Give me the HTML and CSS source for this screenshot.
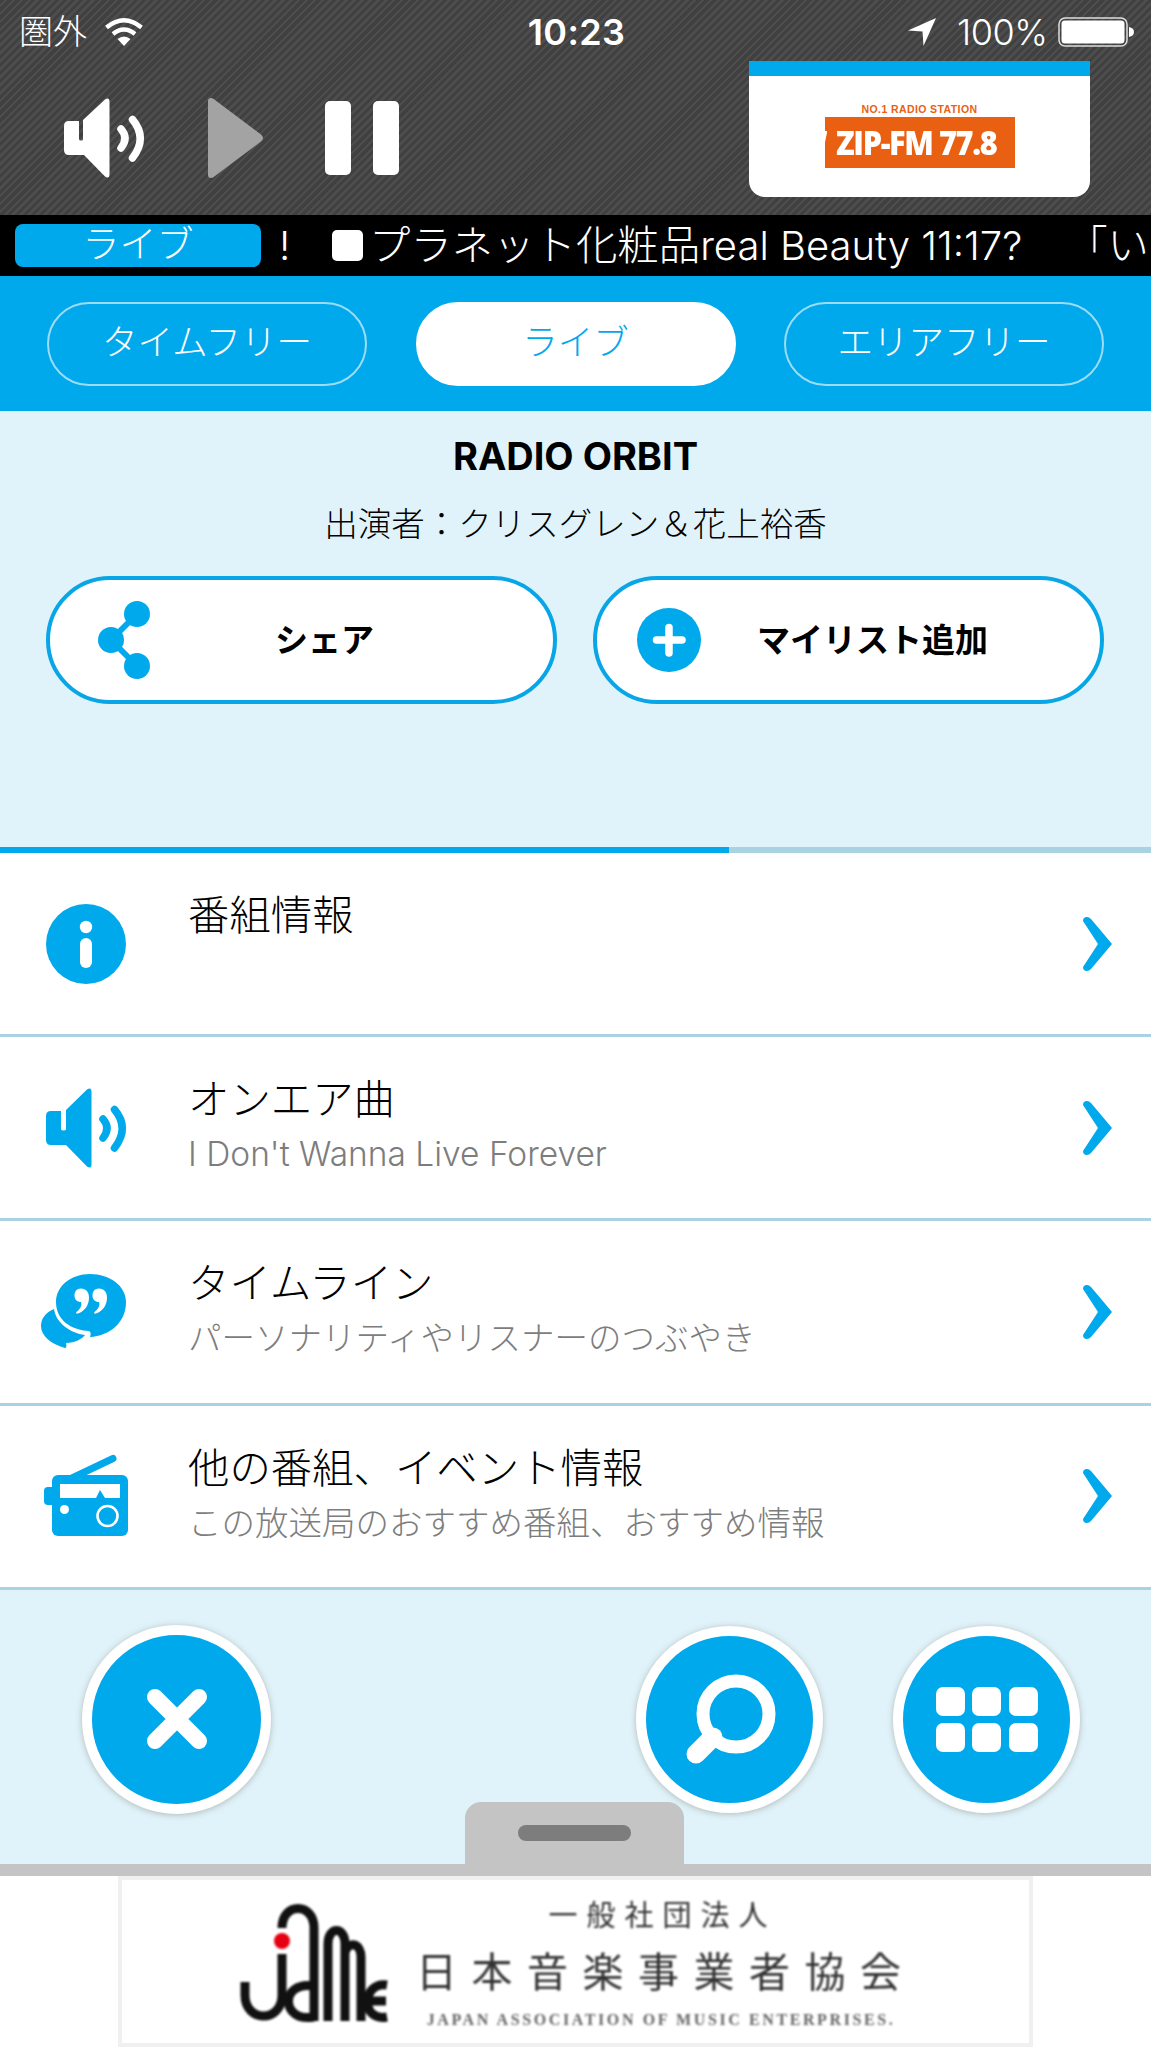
FILE: index.html
```html
<!DOCTYPE html>
<html lang="ja">
<head>
<meta charset="utf-8">
<title>RADIO ORBIT</title>
<link rel="stylesheet" href="styles.css">
</head>
<body>
<div class="app">
  <header class="header">
    <div class="status">
      <div class="status-left">
        <span class="carrier">圏外</span>
        <svg class="wifi" viewBox="0 0 38 28"><g fill="none" stroke="#fff" stroke-width="4.4"><path d="M1.5 9.5Q19-5 36.500 9.500"/><path d="M8 16Q19 7 30 16"/></g><path fill="#fff" d="M12.500 21Q19 16 25.500 21L19 28Z"/></svg>
      </div>
      <span class="clock">10:23</span>
      <div class="status-right">
        <svg class="loc" viewBox="0 0 28 28"><path fill="#fff" d="M28 0L15.500 28L14.500 13.500L0 12.500Z"/></svg>
        <span class="pct">100%</span>
        <svg class="battery" viewBox="0 0 76 30"><rect x="1" y="1" width="68" height="28" rx="6" fill="none" stroke="#ddd" stroke-width="1.500"/><rect x="3.500" y="3.500" width="63" height="23" rx="3.500" fill="#fff"/><path fill="#fff" d="M71 10Q76 11 76 15T71 20Z"/></svg>
      </div>
    </div>
    <div class="player">
      <div class="controls">
        <svg class="speaker" viewBox="0 0 80 80"><use href="#speaker"/></svg>
        <svg class="play" viewBox="0 0 55 80"><path fill="#a3a3a3" d="M0 3Q0 0 3 0Q5 0 7 2L53 36.500Q57 40 53 43.500L7 78Q5 80 3 80Q0 80 0 77Z"/></svg>
        <svg class="pause" viewBox="0 0 74 74"><rect width="26" height="74" rx="5" fill="#fff"/><rect x="48" width="26" height="74" rx="5" fill="#fff"/></svg>
      </div>
      <div class="station">
        <div class="station-tag">NO.1 RADIO STATION</div>
        <div class="station-name"><i class="slash"></i><span>ZIP-FM 77.8</span></div>
      </div>
    </div>
  </header>

  <div class="ticker">
    <span class="live">ライブ</span>
    <div class="ticker-text"><span class="bang">!</span><i class="square"></i><span class="tj">プラネット化粧品</span><span class="te">real Beauty 11:17?</span><span class="tq">「いつ</span></div>
  </div>

  <nav class="tabs">
    <span class="tab">タイムフリー</span>
    <span class="tab on">ライブ</span>
    <span class="tab">エリアフリー</span>
  </nav>

  <section class="program">
    <h1>RADIO ORBIT</h1>
    <p>出演者：クリスグレン＆花上裕香</p>
    <div class="actions">
      <div class="btn">
        <svg class="share" viewBox="0 0 52 78"><g fill="#00a8ec"><path d="M13 39L39 13M13 39L39 65" stroke="#00a8ec" stroke-width="6"/><circle cx="39" cy="13" r="13"/><circle cx="13" cy="39" r="13"/><circle cx="39" cy="65" r="13"/></g></svg>
        <span class="lbl share-lbl">シェア</span>
      </div>
      <div class="btn">
        <svg class="plus" viewBox="0 0 64 64"><circle cx="32" cy="32" r="32" fill="#00a8ec"/><path d="M32 19.500V45M19.500 32H45" stroke="#fff" stroke-width="7.500" stroke-linecap="round"/></svg>
        <span class="lbl plus-lbl">マイリスト追加</span>
      </div>
    </div>
  </section>

  <div class="progress"><div class="progress-fill"></div></div>

  <main class="list">
    <div class="row">
      <svg class="ic" viewBox="0 0 88 84"><circle cx="46" cy="42" r="40" fill="#00a8ec"/><circle cx="46" cy="25" r="6.200" fill="#fff"/><rect x="40" y="36" width="12" height="30" rx="6" fill="#fff"/></svg>
      <div class="txt"><div class="t">番組情報</div></div>
      <svg class="chev" viewBox="0 0 29 54"><use href="#chev"/></svg>
    </div>
    <div class="row">
      <svg class="ic" viewBox="0 0 88 84"><g color="#00a8ec"><use href="#speaker2" transform="translate(6 2)"/></g></svg>
      <div class="txt"><div class="t">オンエア曲</div><div class="s latin">I Don't Wanna Live Forever</div></div>
      <svg class="chev" viewBox="0 0 29 54"><use href="#chev"/></svg>
    </div>
    <div class="row">
      <svg class="ic" viewBox="0 0 88 84"><g fill="#00a8ec"><path d="M14 39C5 43 1 49 1 56C1 66 11 74 25 78C26 78 27 77 26 73C35 73 42 69 45 65C30 63 16 53 14 39Z"/><path d="M50 4C70 4 86 16 86 32C86 53 69 66 50 67C51 64 51 62 49 61C31 60 16 50 16 32C16 16 31 4 50 4Z"/></g><g fill="#fff"><path d="M41 18.500C36.500 18.500 34.500 21.500 34.500 25.500C34.500 29.500 37 32 41 32C42.500 36 39.500 39.500 36.500 42C35.500 43 36.500 44 38 43.500C45 41 49 35 49 27.500C49 22 46 18.500 41 18.500Z"/><path d="M59 18.500C54.500 18.500 52.500 21.500 52.500 25.500C52.500 29.500 55 32 59 32C60.500 36 57.500 39.500 54.500 42C53.500 43 54.500 44 56 43.500C63 41 67 35 67 27.500C67 22 64 18.500 59 18.500Z"/></g></svg>
      <div class="txt"><div class="t">タイムライン</div><div class="s">パーソナリティやリスナーのつぶやき</div></div>
      <svg class="chev" viewBox="0 0 29 54"><use href="#chev"/></svg>
    </div>
    <div class="row">
      <svg class="ic" viewBox="0 0 88 84"><path d="M32 24L73 4.500" stroke="#00a8ec" stroke-width="7" stroke-linecap="round"/><rect x="12" y="21" width="76" height="61" rx="6" fill="#00a8ec"/><rect x="4" y="33" width="12" height="18" rx="4" fill="#00a8ec"/><path fill="#fff" d="M20 30H80V44H65L60 36L56 44H20Z"/><circle cx="24.500" cy="55.500" r="4.500" fill="#fff"/><circle cx="67.500" cy="62" r="10" fill="none" stroke="#fff" stroke-width="2.600"/></svg>
      <div class="txt"><div class="t">他の番組、イベント情報</div><div class="s">この放送局のおすすめ番組、おすすめ情報</div></div>
      <svg class="chev" viewBox="0 0 29 54"><use href="#chev"/></svg>
    </div>
  </main>

  <footer class="dock">
    <div class="round close"><svg viewBox="0 0 60 60"><path d="M8 8L52 52M52 8L8 52" stroke="#fff" stroke-width="16" stroke-linecap="round"/></svg></div>
    <div class="round search"><svg viewBox="0 0 90 90"><circle cx="51" cy="40" r="33" fill="none" stroke="#fff" stroke-width="13"/><path d="M28 63L11 80" stroke="#fff" stroke-width="19" stroke-linecap="round"/></svg></div>
    <div class="round menu"><div class="grid"><i></i><i></i><i></i><i></i><i></i><i></i></div></div>
    <div class="pull"><div class="grip"></div></div>
  </footer>

  <aside class="ad">
    <div class="banner">
      <svg class="jame" viewBox="0 0 150 120"><g fill="none" stroke="#111" stroke-width="9"><path d="M5 80V93C5 121 42 121 42 93V52"/><path d="M42 26C42 0 74 0 74 26V119"/><path d="M74 84C40 78 40 121 74 115"/><path d="M88 119V42C88 24 105 24 105 42V119M105 50C110 38 121 42 121 55V119"/><path d="M147 83C122 79 120 120 147 115M125 99H146"/></g><circle cx="42" cy="39" r="8" fill="#e60012"/></svg>
      <div class="ad-text">
        <div class="a1">一般社団法人</div>
        <div class="a2">日本音楽事業者協会</div>
        <div class="a3">JAPAN ASSOCIATION OF MUSIC ENTERPRISES.</div>
      </div>
    </div>
  </aside>
</div>

<svg class="defs">
  <defs>
    <g id="speaker2">
      <path fill="currentColor" d="M5 23H15V41Q15 42.500 17.500 42.500T20 41V22L41 1.500Q45.500-1.500 45.500 4V76Q45.500 81.500 41 78.500L20 57H5Q0 57 0 52V28Q0 23 5 23Z"/>
      <path fill="none" stroke="currentColor" stroke-width="7.500" stroke-linecap="round" d="M57 31Q65 40 57 50M68.500 21.500Q84 40 68.500 60"/>
    </g>
    <g id="speaker">
      <path fill="#fff" d="M5 23H15V41Q15 42.500 17 42.500T19 41V22L41 1.500Q45.500-1.500 45.500 4V76Q45.500 81.500 41 78.500L20 57H5Q0 57 0 52V28Q0 23 5 23Z"/>
      <path fill="none" stroke="#fff" stroke-width="7.500" stroke-linecap="round" d="M57 31Q65 40 57 50M68.500 21.500Q84 40 68.500 60"/>
    </g>
    <path id="chev" fill="#00a8ec" d="M0 4Q0 0 4 0Q6 0 8 2L29 27L8 52Q6 54 4 54Q0 54 0 50L15 27Z"/>
  </defs>
</svg>
</body>
</html>
```
FILE: styles.css
```css
* { box-sizing: border-box; }
body { margin: 0; background: #fff; color: #000; font-family: Inter, "Noto Sans CJK JP", sans-serif; }
.app { width: 1151px; height: 2048px; overflow: hidden; display: flex; flex-direction: column; }
.app > * { flex: none; }
.defs { display: none; }
svg { display: block; flex: none; overflow: visible; }

.header { height: 215px; color: #fff; background: repeating-linear-gradient(135deg, #404040 0 3px, #4d4d4d 3px 5.600px); }
.status { height: 61px; display: grid; grid-template-columns: 1fr auto 1fr; align-items: center; padding: 2px 17px 0 19px; }
.status-left, .status-right { display: flex; align-items: center; }
.carrier { font-size: 34px; font-weight: 300; line-height: 40px; }
.wifi { width: 38px; height: 28px; margin-left: 18px; }
.clock { font-size: 36px; font-weight: 600; letter-spacing: 0.300px; line-height: 40px; }
.status-right { justify-content: flex-end; }
.loc { width: 28px; height: 28px; }
.pct { font-size: 36px; font-weight: 300; line-height: 40px; width: 92px; margin: 0 9px 0 21px; letter-spacing: -0.500px; white-space: nowrap; }
.battery { width: 76px; height: 30px; }
.player { display: flex; justify-content: space-between; padding-right: 61px; }
.controls { display: flex; padding: 37px 0 0 61px; }
.speaker { width: 86px; height: 80px; }
.play { width: 55px; height: 80px; margin-left: 61px; }
.pause { width: 74px; height: 74px; margin: 3px 0 0 62px; }
.station { width: 341px; height: 136px; border-top: 15px solid #00a8ec; border-radius: 0 0 16px 16px; background: #fff; display: flex; flex-direction: column; align-items: center; padding-top: 27px; }
.station-tag { color: #ea6012; font: 700 10.500px/12px "Liberation Sans", sans-serif; letter-spacing: 0.400px; margin-bottom: 2px; white-space: nowrap; }
.station-name { width: 190px; height: 51px; background: #ea6012; display: flex; align-items: center; color: #fff; font: 800 34px/51px "Open Sans", sans-serif; letter-spacing: -1.500px; white-space: nowrap; }
.station-name span { margin-left: 9px; transform: scaleX(0.900); transform-origin: left; }
.slash { width: 5px; height: 14px; background: #fff; clip-path: polygon(0 0, 100% 0, 0 100%); margin-bottom: 10px; }

.ticker { height: 61px; background: #000; color: #fff; display: flex; align-items: center; padding-left: 15px; overflow: hidden; }
.live { width: 246px; height: 43px; border-radius: 8px; background: #00a8ec; text-align: center; font-size: 37px; line-height: 41px; font-weight: 300; flex: none; }
.ticker-text { display: flex; align-items: center; white-space: nowrap; font-size: 40px; line-height: 61px; font-weight: 300; }
.bang { width: 12px; margin: 0 0 0 18px; }
.square { width: 31px; height: 31px; border-radius: 5px; background: #fff; margin: 0 6px 0 41px; }
.tj { font-size: 41.400px; }
.te { width: 346px; }
.tq { margin-left: 20px; font-size: 41.400px; }

.tabs { height: 135px; background: #00a8ec; display: flex; justify-content: space-between; padding: 26px 47px 0; }
.tab { width: 320px; height: 84px; border: 2px solid #9cdcf7; border-radius: 42px; color: #fff; text-align: center; font-size: 35.500px; line-height: 78px; font-weight: 300; }
.tab.on { background: #fff; border-color: #fff; color: #00a8ec; }

.program { height: 436px; background: #e1f3fa; text-align: center; }
h1 { margin: 0; padding-top: 21px; font-size: 38px; line-height: 48px; font-weight: 700; }
p { margin: 19px 0 0; font-size: 33.500px; line-height: 50px; font-weight: 300; }
.actions { display: flex; justify-content: space-between; padding: 0 47px 0 46px; margin-top: 27px; }
.btn { width: 511px; height: 128px; border: 4px solid #08a6e6; border-radius: 64px; background: #fff; display: flex; align-items: center; }
.share { width: 52px; height: 78px; margin-left: 48px; }
.plus { width: 64px; height: 64px; margin-left: 40px; }
.lbl { font-size: 33px; line-height: 48px; font-weight: 700; white-space: nowrap; }
.share-lbl { margin-left: 125px; }
.plus-lbl { margin-left: 56px; }

.progress { height: 6px; background: #a9d3e2; }
.progress-fill { width: 729px; height: 6px; background: #00a8ec; }
.row { height: 184.200px; border-bottom: 3px solid #a9d3e2; display: flex; padding: 0 39px 0 40px; align-items: center; }
.ic { width: 88px; height: 84px; }
.txt { flex: 1; align-self: stretch; padding: 36px 0 0 60px; white-space: nowrap; }
.t { font-size: 41.400px; line-height: 52px; font-weight: 300; }
.s { font-size: 33.500px; line-height: 48px; margin-top: 5px; font-weight: 300; color: #7d7d7d; }
.chev { width: 29px; height: 54px; }

.dock { height: 274.200px; background: #e1f3fa; border-bottom: 12px solid #c4c4c4; display: flex; align-items: center; position: relative; padding: 0 0 15px 82px; height: 286.200px; }
.round { width: 187px; height: 187px; border-radius: 50%; border: 10px solid #fff; background: #00a8ec; box-shadow: 0 1px 6px rgba(80,80,60,.35); display: flex; align-items: center; justify-content: center; flex: none; }
.close { width: 189px; height: 189px; }
.close svg { width: 60px; height: 60px; }
.search { margin-left: 365px; }
.search svg { width: 90px; height: 90px; }
.menu { margin-left: 70px; }
.grid { display: grid; grid-template-columns: repeat(3, 29px); gap: 7.500px; }
.grid i { height: 29px; border-radius: 7px; background: #fff; }
.pull { position: absolute; left: 465px; bottom: 0; width: 219px; height: 62px; border-radius: 16px 16px 0 0; background: #c4c4c4; }
.grip { width: 113px; height: 16px; border-radius: 8px; background: #7d7d7d; margin: 23px auto 0 53px; }

.ad { height: 172px; display: flex; justify-content: center; }
.banner { width: 915px; height: 171px; border: 4px solid #f0f0f0; display: flex; margin: 0 0 0 0; padding: 22px 0 0 118px; }
.jame { width: 150px; height: 120px; filter: blur(0.900px); }
.ad-text { width: 490px; margin-left: 26px; margin-top: -4px; color: #333; filter: blur(1.200px); white-space: nowrap; text-align: center; font-family: "Liberation Serif", "Noto Sans CJK JP", serif; }
.a1 { font-size: 29px; letter-spacing: 9px; line-height: 36px; padding-left: 3px; }
.a2 { font-size: 41px; letter-spacing: 14.500px; line-height: 56px; margin-top: 11px; }
.a3 { font-size: 16px; letter-spacing: 2.600px; line-height: 20px; margin-top: 9px; font-weight: 700; color: #666; }
```
